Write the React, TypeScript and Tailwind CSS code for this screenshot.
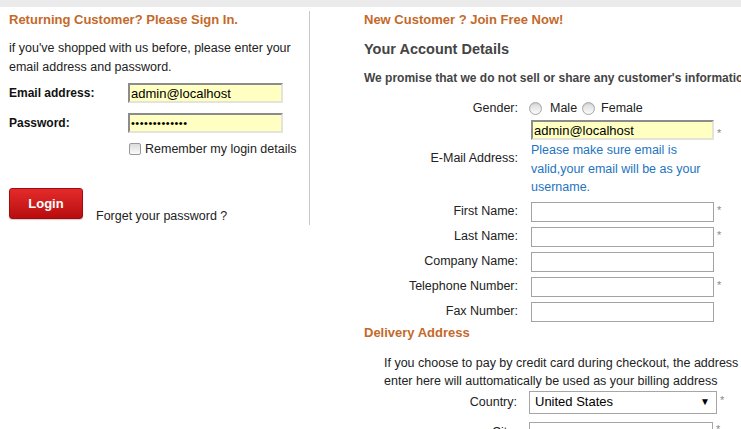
import React from "react";

const orange = "text-[#c4692a]";

function Star({ className = "" }: { className?: string }) {
  return (
    <span className={`ml-[3px] text-[11px] leading-none text-[#8a8a8a] ${className}`}>*</span>
  );
}

function Radio() {
  return (
    <span className="inline-block w-[13px] h-[13px] rounded-full border border-[#a6a6a6] bg-linear-to-b from-[#d9d9d9] to-[#fbfbfb] shadow-[inset_0_1px_1px_rgba(0,0,0,0.08)]" />
  );
}

function Field({
  label,
  star,
  yellow,
  value,
}: {
  label: string;
  star?: boolean;
  yellow?: boolean;
  value?: string;
}) {
  return (
    <div className="grid grid-cols-[154px_1fr] gap-x-[13px] items-center h-[20px]">
      <div className="text-right text-[#222]">{label}</div>
      <div className="flex items-start">
        <input
          readOnly
          value={value ?? ""}
          className={`w-[183px] h-[20px] px-[2px] text-[13px] outline-none ${
            yellow
              ? "bg-[#ffffc2] border-2 border-t-[#8c8c8c] border-l-[#8c8c8c] border-r-[#e4e4da] border-b-[#e4e4da]"
              : "bg-white border border-[#a3a3a3]"
          }`}
        />
        {star && <Star className="mt-[3px]" />}
      </div>
    </div>
  );
}

export default function App() {
  return (
    <div className="w-[741px] h-[429px] overflow-hidden bg-white font-['Liberation_Sans',Arial,sans-serif] text-[12.5px] text-[#222]">
      <div className="h-[7px] bg-[#ebebeb]" />
      <div className="flex items-start">
        {/* Returning customer */}
        <div className="w-[310px] shrink-0 mt-[4px] h-[214px] border-r border-[#c9c9c9] pl-[9px]">
          <h2 className={`text-[13px] font-bold leading-[18px] ${orange}`}>
            Returning Customer? Please Sign In.
          </h2>
          <p className="mt-[10px] leading-[19px]">
            if you've shopped with us before, please enter your
            <br />
            email address and password.
          </p>
          <div className="mt-[6px] flex items-center h-[20px]">
            <div className="w-[119px] text-[12px] font-bold text-[#111]">Email address:</div>
            <input
              readOnly
              value="admin@localhost"
              className="w-[155px] h-[20px] px-[1px] text-[13px] text-black outline-none bg-[#ffffc2] border-2 border-t-[#8c8c8c] border-l-[#8c8c8c] border-r-[#e4e4da] border-b-[#e4e4da]"
            />
          </div>
          <div className="mt-[10px] flex items-center h-[20px]">
            <div className="w-[119px] text-[12px] font-bold text-[#111]">Password:</div>
            <div className="w-[155px] h-[20px] px-[1px] flex items-center bg-[#ffffc2] border-2 border-t-[#8c8c8c] border-l-[#8c8c8c] border-r-[#e4e4da] border-b-[#e4e4da] text-[11px] tracking-[0.5px] leading-none text-black overflow-hidden">
              •••••••••••••
            </div>
          </div>
          <div className="mt-[9px] pl-[120px] flex items-center gap-[4px] h-[14px]">
            <span className="inline-block w-[12px] h-[12px] rounded-[2px] border border-[#9a9a9a] bg-linear-to-b from-[#dcdcdc] to-[#fafafa]" />
            <span>Remember my login details</span>
          </div>
          <div className="mt-[32px] flex items-start">
            <button className="w-[74px] h-[31px] rounded-[3px] border border-[#a30c0c] bg-linear-to-b from-[#e42a2a] to-[#b80b0d] text-white text-[13px] font-bold shadow-[0_1px_1px_rgba(0,0,0,0.2)]">
              Login
            </button>
            <span className="ml-[13px] mt-[21px] leading-[14px]">Forget your password ?</span>
          </div>
        </div>

        {/* New customer */}
        <div className="flex-1 min-w-0 mt-[4px] pl-[54px]">
          <h2 className={`text-[13px] font-bold leading-[18px] ${orange}`}>
            New Customer ? Join Free Now!
          </h2>
          <h3 className="mt-[11px] text-[14.5px] font-bold leading-[18px] text-[#444]">
            Your Account Details
          </h3>
          <p className="mt-[12px] text-[12px] font-bold leading-[16px] text-[#444] whitespace-nowrap">
            We promise that we do not sell or share any customer's information with any third party.
          </p>

          <div className="mt-[13px] grid grid-cols-[154px_1fr] gap-x-[13px] items-center h-[16px]">
            <div className="text-right">Gender:</div>
            <div className="flex items-center">
              <span className="mr-[8px] -ml-[2px] flex"><Radio /></span>
              <span>Male</span>
              <span className="ml-[5px] mr-[6px] flex"><Radio /></span>
              <span>Female</span>
            </div>
          </div>

          <div className="mt-[5px] grid grid-cols-[154px_1fr] gap-x-[13px] items-center">
            <div className="text-right">E-Mail Address:</div>
            <div>
              <div className="flex items-end">
                <input
                  readOnly
                  value="admin@localhost"
                  className="w-[183px] h-[20px] px-[1px] text-[13px] text-black outline-none bg-[#ffffc2] border-2 border-t-[#8c8c8c] border-l-[#8c8c8c] border-r-[#e4e4da] border-b-[#e4e4da]"
                />
                <Star className="mb-[1px]" />
              </div>
              <p className="pt-[1px] leading-[18.5px] text-[#2374bf]">
                Please make sure email is
                <br />
                valid,your email will be as your
                <br />
                username.
              </p>
            </div>
          </div>

          <div className="mt-[5px] flex flex-col gap-[5px]">
            <Field label="First Name:" star />
            <Field label="Last Name:" star />
            <Field label="Company Name:" />
            <Field label="Telephone Number:" star />
            <Field label="Fax Number:" />
          </div>

          <h2 className={`mt-[2px] text-[13px] font-bold leading-[18px] ${orange}`}>Delivery Address</h2>
          <p className="mt-[12px] pl-[20px] leading-[18px] whitespace-nowrap">
            If you choose to pay by credit card during checkout, the address you
            <br />
            enter here will auttomatically be used as your billing address
          </p>

          <div className="mt-[1px] grid grid-cols-[153px_1fr] gap-x-[12px] items-center h-[23px]">
            <div className="text-right">Country:</div>
            <div className="flex items-start">
              <div className="w-[188px] h-[23px] border border-[#a6a6a6] bg-white flex items-center justify-between pl-[5px] pr-[6px] text-[13px] text-black">
                <span>United States</span>
                <span className="text-[10px] leading-none">▼</span>
              </div>
              <Star className="mt-[4px]" />
            </div>
          </div>
          <div className="mt-[8px] grid grid-cols-[153px_1fr] gap-x-[12px] items-start">
            <div className="text-right leading-[20px]">City:</div>
            <div className="flex items-start">
              <div className="w-[184px] h-[20px] border border-[#a6a6a6] bg-white" />
              <Star className="mt-[2px]" />
            </div>
          </div>
        </div>
      </div>
    </div>
  );
}
